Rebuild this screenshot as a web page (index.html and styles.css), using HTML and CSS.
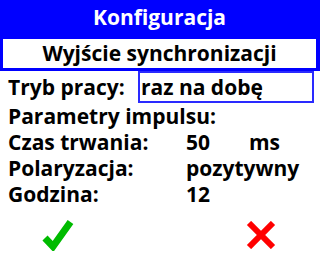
FILE: index.html
```html
<!DOCTYPE html>
<html lang="pl">
<head>
<meta charset="utf-8">
<link rel="stylesheet" href="styles.css">
</head>
<body>
<div class="screen">
  <div class="header">
    <div class="title">Konfiguracja</div>
    <div class="subtitle">Wyjście synchronizacji</div>
  </div>
  <div class="content">
    <div class="row first">
      <span class="label">Tryb pracy:</span>
      <span class="field">raz na dobę</span>
    </div>
    <div class="row"><span class="label">Parametry impulsu:</span></div>
    <div class="row">
      <span class="label col">Czas trwania:</span>
      <span class="value num">50</span>
      <span class="unit">ms</span>
    </div>
    <div class="row">
      <span class="label col">Polaryzacja:</span>
      <span class="value">pozytywny</span>
    </div>
    <div class="row">
      <span class="label col">Godzina:</span>
      <span class="value">12</span>
    </div>
  </div>
  <div class="footer">
    <svg class="icon ok" width="32" height="32" viewBox="0 0 32 32">
      <polyline points="3,19 11,27.5 28.5,3" fill="none" stroke="#00bb00" stroke-width="7" stroke-linejoin="miter"/>
    </svg>
    <svg class="icon cancel" width="30" height="28" viewBox="0 0 30 28">
      <path d="M3 2 L27 26 M27 2 L3 26" fill="none" stroke="#ff0000" stroke-width="6"/>
    </svg>
  </div>
</div>
</body>
</html>
```
FILE: styles.css
```css
html, body {
  margin: 0;
  padding: 0;
  background: #ffffff;
}
.screen {
  width: 320px;
  height: 256px;
  overflow: hidden;
  font-family: "Open Sans", Lato, sans-serif;
  font-weight: 700;
  color: #000000;
  display: flex;
  flex-direction: column;
}
.header {
  background: #0000ff;
  padding: 0 4px 3px 3px;
  display: flex;
  flex-direction: column;
}
.title {
  height: 39px;
  line-height: 34px;
  text-align: center;
  color: #ffffff;
  font-size: 21px;
}
.subtitle {
  height: 29px;
  line-height: 29px;
  background: #ffffff;
  text-align: center;
  font-size: 21px;
}
.content {
  padding-left: 8px;
  display: flex;
  flex-direction: column;
  font-size: 21px;
}
.row {
  display: flex;
  align-items: center;
  height: 26px;
  line-height: 26px;
}
.row.first {
  height: 32px;
}
.label {
  white-space: nowrap;
}
.first .label {
  width: 130px;
}
.field {
  box-sizing: border-box;
  height: 32px;
  width: 176px;
  border: 2px solid #2a2aff;
  padding-left: 1px;
  line-height: 28px;
}
.col {
  width: 178px;
}
.value {
  white-space: nowrap;
}
.num {
  width: 63px;
}
.footer {
  flex: 1;
  display: flex;
  justify-content: space-between;
  align-items: center;
  padding: 6px 44px 0 42px;
}
.icon {
  display: block;
}
```
